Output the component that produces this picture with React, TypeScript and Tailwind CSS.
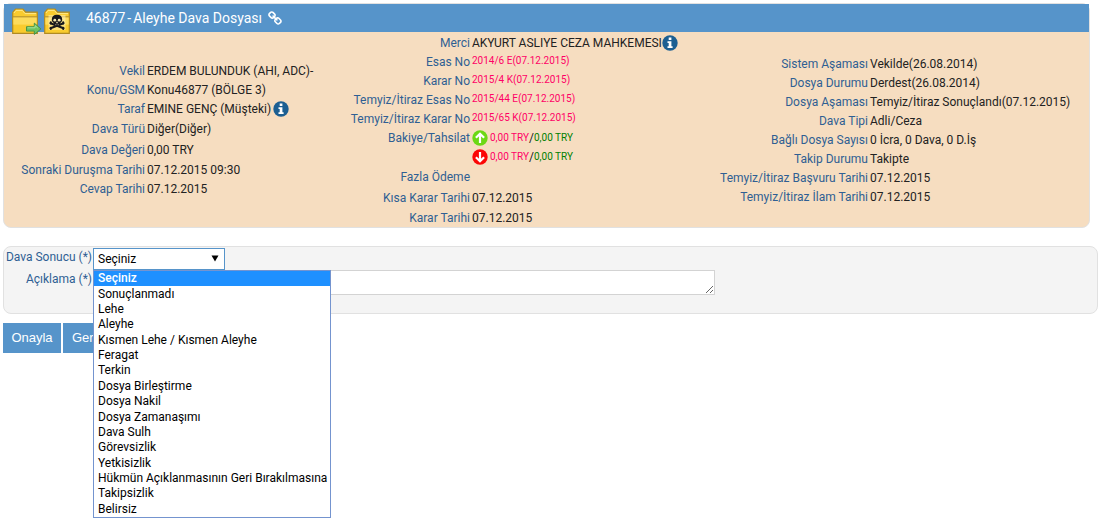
import { useState } from "react";
import type { ReactNode } from "react";
import clsx from "clsx";

type Row = { label: string; value?: ReactNode; tall?: boolean };

const OUTCOMES = [
  "Seçiniz",
  "Sonuçlanmadı",
  "Lehe",
  "Aleyhe",
  "Kısmen Lehe / Kısmen Aleyhe",
  "Feragat",
  "Terkin",
  "Dosya Birleştirme",
  "Dosya Nakil",
  "Dosya Zamanaşımı",
  "Dava Sulh",
  "Görevsizlik",
  "Yetkisizlik",
  "Hükmün Açıklanmasının Geri Bırakılmasına",
  "Takipsizlik",
  "Belirsiz",
];

function Folder() {
  return (
    <>
      <path d="M.7 25.3V4.5L3.5 1H11l2.6 3.2h11.7v21.1z" fill="#f9cb2e" stroke="#b08a22" strokeWidth="1.2" />
      <path d="M1.4 8.6h23.2v8H1.4z" fill="#fddc5c" />
      <path d="M1 8.8h24" stroke="#b5902a" strokeWidth="1.1" />
      <path d="M2 5l2-2.6h6.4L13 5.6h11" fill="none" stroke="#fde88a" />
    </>
  );
}

function FolderMoveIcon() {
  return (
    <svg width="30" height="27" viewBox="0 0 30 27" aria-hidden="true">
      <Folder />
      <path d="M14.5 18.7h7.8v-3.6l6.6 5.8-6.6 5.6v-3.4h-7.8z" fill="#6cc263" stroke="#3f8f46" strokeWidth=".9" />
      <path d="M15.5 19.8h7.6v-2.2l2.6 2.3" fill="none" stroke="#a9e29b" />
    </svg>
  );
}

function FolderSkullIcon() {
  return (
    <svg width="26" height="27" viewBox="0 0 26 27" aria-hidden="true">
      <Folder />
      <path d="M4.5 7h17v15h-17z" fill="#fff3b8" opacity=".55" />
      <g stroke="#17171c" strokeWidth="2" strokeLinecap="round">
        <path d="M6.5 15.2l13 5M19.5 15.2l-13 5" />
        <path d="M6.8 14.2v1.4M19.2 14.2v1.4M6.8 19.8v1.3M19.2 19.8v1.3" />
      </g>
      <path d="M13 6.8c-3.4 0-5.2 2-5.2 4.6 0 1.7.7 2.7 1.9 3.5v2.6h6.6v-2.6c1.2-.8 1.9-1.8 1.9-3.5 0-2.6-1.8-4.6-5.2-4.6z" fill="#17171c" />
      <circle cx="10.8" cy="12.2" r="1.4" fill="#f4e7b0" />
      <circle cx="15.2" cy="12.2" r="1.4" fill="#f4e7b0" />
      <path d="M13 13.7l.8 1.4h-1.6zM11.5 16v1.3M13 16v1.3M14.5 16v1.3" fill="#f4e7b0" stroke="#f4e7b0" strokeWidth=".4" />
    </svg>
  );
}

function ChainIcon() {
  return (
    <svg width="15" height="15" viewBox="0 0 1792 1792" fill="#fff" aria-hidden="true">
      <path d="M1456 1216q0-40-28-68l-208-208q-28-28-68-28-42 0-72 32 3 3 19 18.5t21.5 21.5 15 19 13 25.5 3.5 27.5q0 40-28 68t-68 28q-15 0-27.5-3.5t-25.5-13-19-15-21.5-21.5-18.5-19q-33 31-33 73 0 40 28 68l206 207q27 27 68 27 40 0 68-26l147-146q28-28 28-67zm-703-705q0-40-28-68l-206-207q-28-28-68-28-39 0-68 27l-147 146q-28 28-28 67 0 40 28 68l208 208q27 27 68 27 42 0 72-31-3-3-19-18.5t-21.5-21.5-15-19-13-25.5-3.5-27.5q0-40 28-68t68-28q15 0 27.5 3.5t25.5 13 19 15 21.5 21.5 18.5 19q33-31 33-73zm895 705q0 120-85 203l-147 146q-83 83-203 83-121 0-204-85l-206-207q-83-83-83-203 0-123 88-209l-88-88q-86 88-208 88-120 0-204-84l-208-208q-84-84-84-204t85-203l147-146q83-83 203-83 121 0 204 85l206 207q83 83 83 203 0 123-88 209l88 88q86-88 208-88 120 0 204 84l208 208q84 84 84 204z" />
    </svg>
  );
}

function InfoButton({ label }: { label: string }) {
  return (
    <button type="button" aria-label={label} className="shrink-0">
      <svg width="16" height="16" viewBox="0 0 16 16" aria-hidden="true">
        <circle cx="8" cy="8" r="7.7" fill="#1c5f92" />
        <path d="M6.7 2.6h2.7v2.3H6.7zM5.5 6.3h3.9v4.9h1.2v1.8H5.5v-1.8h1.2V8H5.5z" fill="#fff" />
      </svg>
    </button>
  );
}

function ArrowIcon({ down }: { down?: boolean }) {
  return (
    <svg width="16" height="16" viewBox="0 0 16 16" className="shrink-0" aria-hidden="true">
      <circle cx="8" cy="8" r="7.7" fill={down ? "#fb0606" : "#6cd814"} />
      <path
        d={down ? "M8 3v9M3.9 8.2L8 12.3l4.1-4.1" : "M8 13V4M3.9 7.8L8 3.7l4.1 4.1"}
        fill="none"
        stroke="#fff"
        strokeWidth="2.2"
      />
    </svg>
  );
}

function Balance({ down }: { down?: boolean }) {
  return (
    <span className="flex items-center text-[10px] leading-4">
      <ArrowIcon down={down} />
      <span className="ml-0.5 text-[#ff0066]">0,00 TRY</span>
      <span className="text-xs leading-4">/</span>
      <span className="text-[#008000]">0,00 TRY</span>
    </span>
  );
}

function CaseNo({ children }: { children: ReactNode }) {
  return <span className="block pb-0.5 text-[10px] leading-4 text-[#ff0066]">{children}</span>;
}

const leftRows: Row[] = [
  { label: "Vekil", value: "ERDEM BULUNDUK (AHI, ADC)-" },
  { label: "Konu/GSM", value: "Konu46877 (BÖLGE 3)" },
  {
    label: "Taraf",
    value: (
      <span className="flex items-center gap-0.5">
        EMINE GENÇ (Müşteki) <InfoButton label="Taraf bilgisi" />
      </span>
    ),
  },
  { label: "Dava Türü", value: "Diğer(Diğer)", tall: true },
  { label: "Dava Değeri", value: "0,00 TRY", tall: true },
  { label: "Sonraki Duruşma Tarihi", value: "07.12.2015 09:30" },
  { label: "Cevap Tarihi", value: "07.12.2015" },
];

const middleRows: Row[] = [
  {
    label: "Merci",
    value: (
      <span className="flex items-center">
        AKYURT ASLIYE CEZA MAHKEMESI <InfoButton label="Merci bilgisi" />
      </span>
    ),
  },
  { label: "Esas No", value: <CaseNo>2014/6 E(07.12.2015)</CaseNo> },
  { label: "Karar No", value: <CaseNo>2015/4 K(07.12.2015)</CaseNo> },
  { label: "Temyiz/İtiraz Esas No", value: <CaseNo>2015/44 E(07.12.2015)</CaseNo> },
  { label: "Temyiz/İtiraz Karar No", value: <CaseNo>2015/65 K(07.12.2015)</CaseNo> },
  { label: "Bakiye/Tahsilat", value: <Balance /> },
  { label: "", value: <Balance down /> },
  { label: "Fazla Ödeme", tall: true },
  { label: "Kısa Karar Tarihi", value: "07.12.2015", tall: true },
  { label: "Karar Tarihi", value: "07.12.2015" },
];

const rightRows: Row[] = [
  { label: "Sistem Aşaması", value: "Vekilde(26.08.2014)" },
  { label: "Dosya Durumu", value: "Derdest(26.08.2014)" },
  { label: "Dosya Aşaması", value: "Temyiz/İtiraz Sonuçlandı(07.12.2015)" },
  { label: "Dava Tipi", value: "Adli/Ceza" },
  { label: "Bağlı Dosya Sayısı", value: "0 İcra, 0 Dava, 0 D.İş" },
  { label: "Takip Durumu", value: "Takipte" },
  { label: "Temyiz/İtiraz Başvuru Tarihi", value: "07.12.2015" },
  { label: "Temyiz/İtiraz İlam Tarihi", value: "07.12.2015" },
];

function Details({ rows, labelWidth }: { rows: Row[]; labelWidth: string }) {
  return (
    <table className="border-collapse whitespace-nowrap">
      <tbody>
        {rows.map((r, i) => (
          <tr key={i} className={r.tall ? "h-[21px]" : "h-[19px]"}>
            <th scope="row" className={clsx("p-0 text-right font-normal text-[#2f5f93]", labelWidth)}>
              {r.label}
            </th>
            <td className="py-0 pr-0 pl-0.5">{r.value}</td>
          </tr>
        ))}
      </tbody>
    </table>
  );
}

export default function App() {
  const [outcome, setOutcome] = useState("Seçiniz");
  const [open, setOpen] = useState(true);
  const [note, setNote] = useState("");

  return (
    <main className="min-h-screen bg-white pt-[3px] pr-[5px] pl-[3px] font-['Roboto','Noto_Sans',sans-serif] text-xs leading-4 text-[#222]">
      <section className="mr-2 rounded-lg border border-[#e1e1e1] bg-[#f6ddc0]">
        <header className="flex h-7 items-center bg-[#5694ca] pl-2 text-white">
          <div className="flex h-7 gap-0.5 pt-1">
            <FolderMoveIcon />
            <FolderSkullIcon />
          </div>
          <h1 className="ml-4 flex gap-0.5 text-sm">
            <span>46877</span>
            <span>-</span>
            <span>Aleyhe Dava Dosyası</span>
          </h1>
          <a href="#dosya" aria-label="Dosya bağlantısı" className="ml-1.5">
            <ChainIcon />
          </a>
        </header>
        <div className="grid grid-cols-[344fr_368fr_373fr] items-center pt-px">
          <Details rows={leftRows} labelWidth="w-[141px]" />
          <Details rows={middleRows} labelWidth="w-[122px]" />
          <Details rows={rightRows} labelWidth="w-[152px]" />
        </div>
      </section>

      <form onSubmit={(e) => e.preventDefault()} className="mt-[18px]">
        <div className="rounded-lg border border-[#e1e1e1] bg-[#f4f4f4] pt-px pb-[18px]">
          <div className="flex items-start">
            <label htmlFor="outcome" className="w-[89px] shrink-0 pr-px text-right leading-[18px] whitespace-nowrap text-[#2f5f93]">
              Dava Sonucu (*)
            </label>
            <div className="relative">
              <select
                id="outcome"
                value={outcome}
                onChange={(e) => setOutcome(e.target.value)}
                onMouseDown={(e) => {
                  e.preventDefault();
                  setOpen(!open);
                }}
                className="block h-[22px] w-[132px] appearance-none border border-[#5694ca] bg-white pl-1 text-black outline-none"
              >
                {OUTCOMES.map((o) => (
                  <option key={o}>{o}</option>
                ))}
              </select>
              <svg width="8" height="7" viewBox="0 0 8 7" className="pointer-events-none absolute top-[7px] right-[6px]" aria-hidden="true">
                <path d="M.5.5h7L4 6.5z" />
              </svg>
              {open && (
                <ul
                  role="listbox"
                  aria-label="Dava Sonucu"
                  className="absolute top-full left-0 z-10 flex h-[248px] w-[238px] flex-col border border-[#7494cf] bg-white whitespace-nowrap text-black"
                >
                  {OUTCOMES.map((o) => (
                    <li
                      key={o}
                      role="option"
                      aria-selected={o === outcome}
                      onClick={() => {
                        setOutcome(o);
                        setOpen(false);
                      }}
                      className={clsx(
                        "flex flex-1 items-center pl-1 leading-[15px]",
                        o === outcome && "bg-[#1e90ff] font-medium text-white",
                      )}
                    >
                      {o}
                    </li>
                  ))}
                </ul>
              )}
            </div>
          </div>
          <div className="flex items-start">
            <label htmlFor="note" className="w-[89px] shrink-0 pr-px text-right leading-[18px] whitespace-nowrap text-[#2f5f93]">
              Açıklama (*)
            </label>
            <textarea
              id="note"
              value={note}
              onChange={(e) => setNote(e.target.value)}
              className="block h-[25px] w-[622px] border border-[#d3d3d3] bg-white outline-none"
            />
          </div>
        </div>
        <div className="mt-[9px] flex gap-0.5 font-['Liberation_Sans',Arial,sans-serif] text-[13px] text-white">
          <button type="submit" className="h-[30px] w-[58px] bg-[#5694ca]">
            Onayla
          </button>
          <button type="button" className="h-[30px] bg-[#5694ca] px-[9px]">
            Geri
          </button>
        </div>
      </form>
    </main>
  );
}
